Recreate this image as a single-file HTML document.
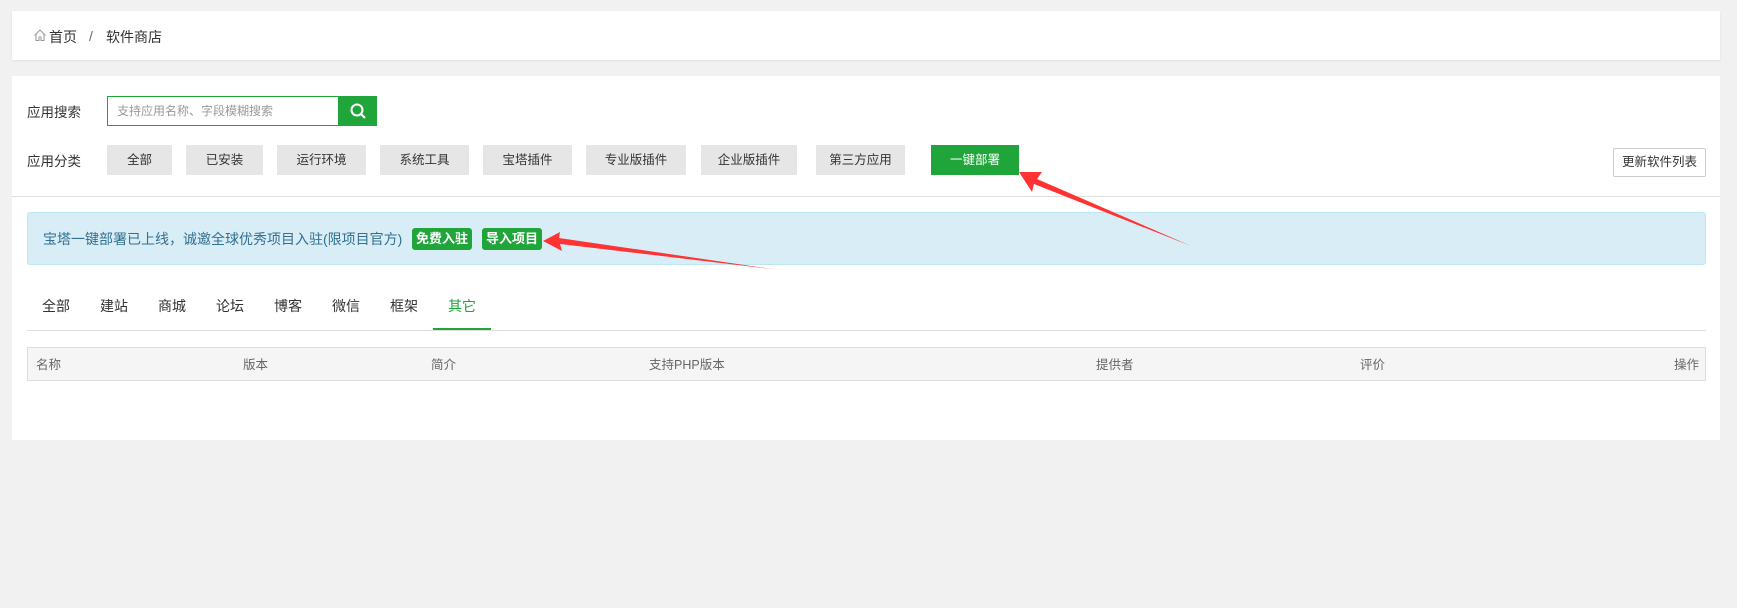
<!DOCTYPE html>
<html><head><meta charset="utf-8"><style>
*{margin:0;padding:0;box-sizing:border-box}
body{width:1737px;height:608px;background:#f1f1f1;font-family:"Liberation Sans","Noto Sans CJK SC",sans-serif;font-size:13px;color:#333;position:relative;overflow:hidden}
.a{position:absolute}
.card{background:#fff;left:12px;width:1708px}
.cat{position:absolute;top:145px;height:30px;line-height:30px;background:#e6e6e6;text-align:center;font-size:12.5px;color:#333}
.tab{position:absolute;top:296px;font-size:14px;color:#333}
.th{position:absolute;top:354px;font-size:12.5px;color:#666}
</style></head><body>
<div class="a card" style="top:11px;height:49px;box-shadow:0 1px 2px rgba(0,0,0,.08)"></div>
<svg class="a" style="left:33px;top:28px" width="14" height="14" viewBox="0 0 14 14"><path d="M1.5 7.5L7 2l5.5 5.5M3 6v6.5h3V9h2v3.5h3V6" fill="none" stroke="#999" stroke-width="1"/></svg>
<div class="a" style="left:49px;top:27px;font-size:14px">首页</div>
<div class="a" style="left:89px;top:28px;font-size:14px;color:#666">/</div>
<div class="a" style="left:106px;top:27px;font-size:14px">软件商店</div>

<div class="a card" style="top:76px;height:364px"></div>
<div class="a" style="left:27px;top:101px;font-size:13.5px">应用搜索</div>
<div class="a" style="left:107px;top:96px;width:232px;height:30px;border:1px solid #20a53a;border-right:0;background:#fff;color:#999;font-size:12px;line-height:28px;padding-left:9px">支持应用名称、字段模糊搜索</div>
<div class="a" style="left:338px;top:96px;width:39px;height:30px;background:#20a53a"></div>
<svg class="a" style="left:349px;top:102px" width="18" height="18" viewBox="0 0 18 18"><circle cx="8" cy="8" r="5.5" fill="none" stroke="#fff" stroke-width="2"/><path d="M12 12l4 4" stroke="#fff" stroke-width="2"/></svg>
<div class="a" style="left:27px;top:150px;font-size:13.5px">应用分类</div>
<div class="cat" style="left:107px;width:65px">全部</div>
<div class="cat" style="left:186px;width:77px">已安装</div>
<div class="cat" style="left:277px;width:89px">运行环境</div>
<div class="cat" style="left:380px;width:89px">系统工具</div>
<div class="cat" style="left:483px;width:89px">宝塔插件</div>
<div class="cat" style="left:586px;width:100px">专业版插件</div>
<div class="cat" style="left:701px;width:96px">企业版插件</div>
<div class="cat" style="left:816px;width:89px">第三方应用</div>
<div class="cat" style="left:931px;width:88px;background:#20a53a;color:#fff">一键部署</div>
<div class="a" style="left:1613px;top:148px;width:93px;height:29px;border:1px solid #ccc;border-radius:2px;text-align:center;line-height:27px;font-size:12.5px">更新软件列表</div>
<div class="a" style="left:12px;top:196px;width:1708px;height:1px;background:#ddd"></div>

<div class="a" style="left:27px;top:212px;width:1679px;height:53px;background:#d9edf7;border:1px solid #bce8f1;border-radius:3px"></div>
<div class="a" style="left:43px;top:229px;font-size:14px;color:#31708f">宝塔一键部署已上线，诚邀全球优秀项目入驻(限项目官方)</div>
<div class="a" style="left:412px;top:228px;width:60px;height:22px;background:#20a53a;color:#fff;border-radius:3px;text-align:center;line-height:22px;font-size:13px;font-weight:bold">免费入驻</div>
<div class="a" style="left:482px;top:228px;width:60px;height:22px;background:#20a53a;color:#fff;border-radius:3px;text-align:center;line-height:22px;font-size:13px;font-weight:bold">导入项目</div>

<div class="tab" style="left:42px">全部</div>
<div class="tab" style="left:100px">建站</div>
<div class="tab" style="left:158px">商城</div>
<div class="tab" style="left:216px">论坛</div>
<div class="tab" style="left:274px">博客</div>
<div class="tab" style="left:332px">微信</div>
<div class="tab" style="left:390px">框架</div>
<div class="tab" style="left:448px;color:#20a53a">其它</div>
<div class="a" style="left:27px;top:330px;width:1679px;height:1px;background:#ddd"></div>
<div class="a" style="left:433px;top:328px;width:58px;height:2px;background:#20a53a"></div>

<div class="a" style="left:27px;top:347px;width:1679px;height:34px;background:#f5f5f5;border:1px solid #ddd"></div>
<div class="th" style="left:36px">名称</div>
<div class="th" style="left:243px">版本</div>
<div class="th" style="left:431px">简介</div>
<div class="th" style="left:649px">支持PHP版本</div>
<div class="th" style="left:1096px">提供者</div>
<div class="th" style="left:1360px">评价</div>
<div class="th" style="left:1674px">操作</div>

<svg class="a" style="left:0;top:0" width="1737" height="608">
<polygon points="1019,172 1042,172 1037,179 1191,246 1034,184 1032,192" fill="#f33"/>
<polygon points="543,241 560,232 559,238 772,269 560,244 562,251" fill="#f33"/>
</svg>
</body></html>
